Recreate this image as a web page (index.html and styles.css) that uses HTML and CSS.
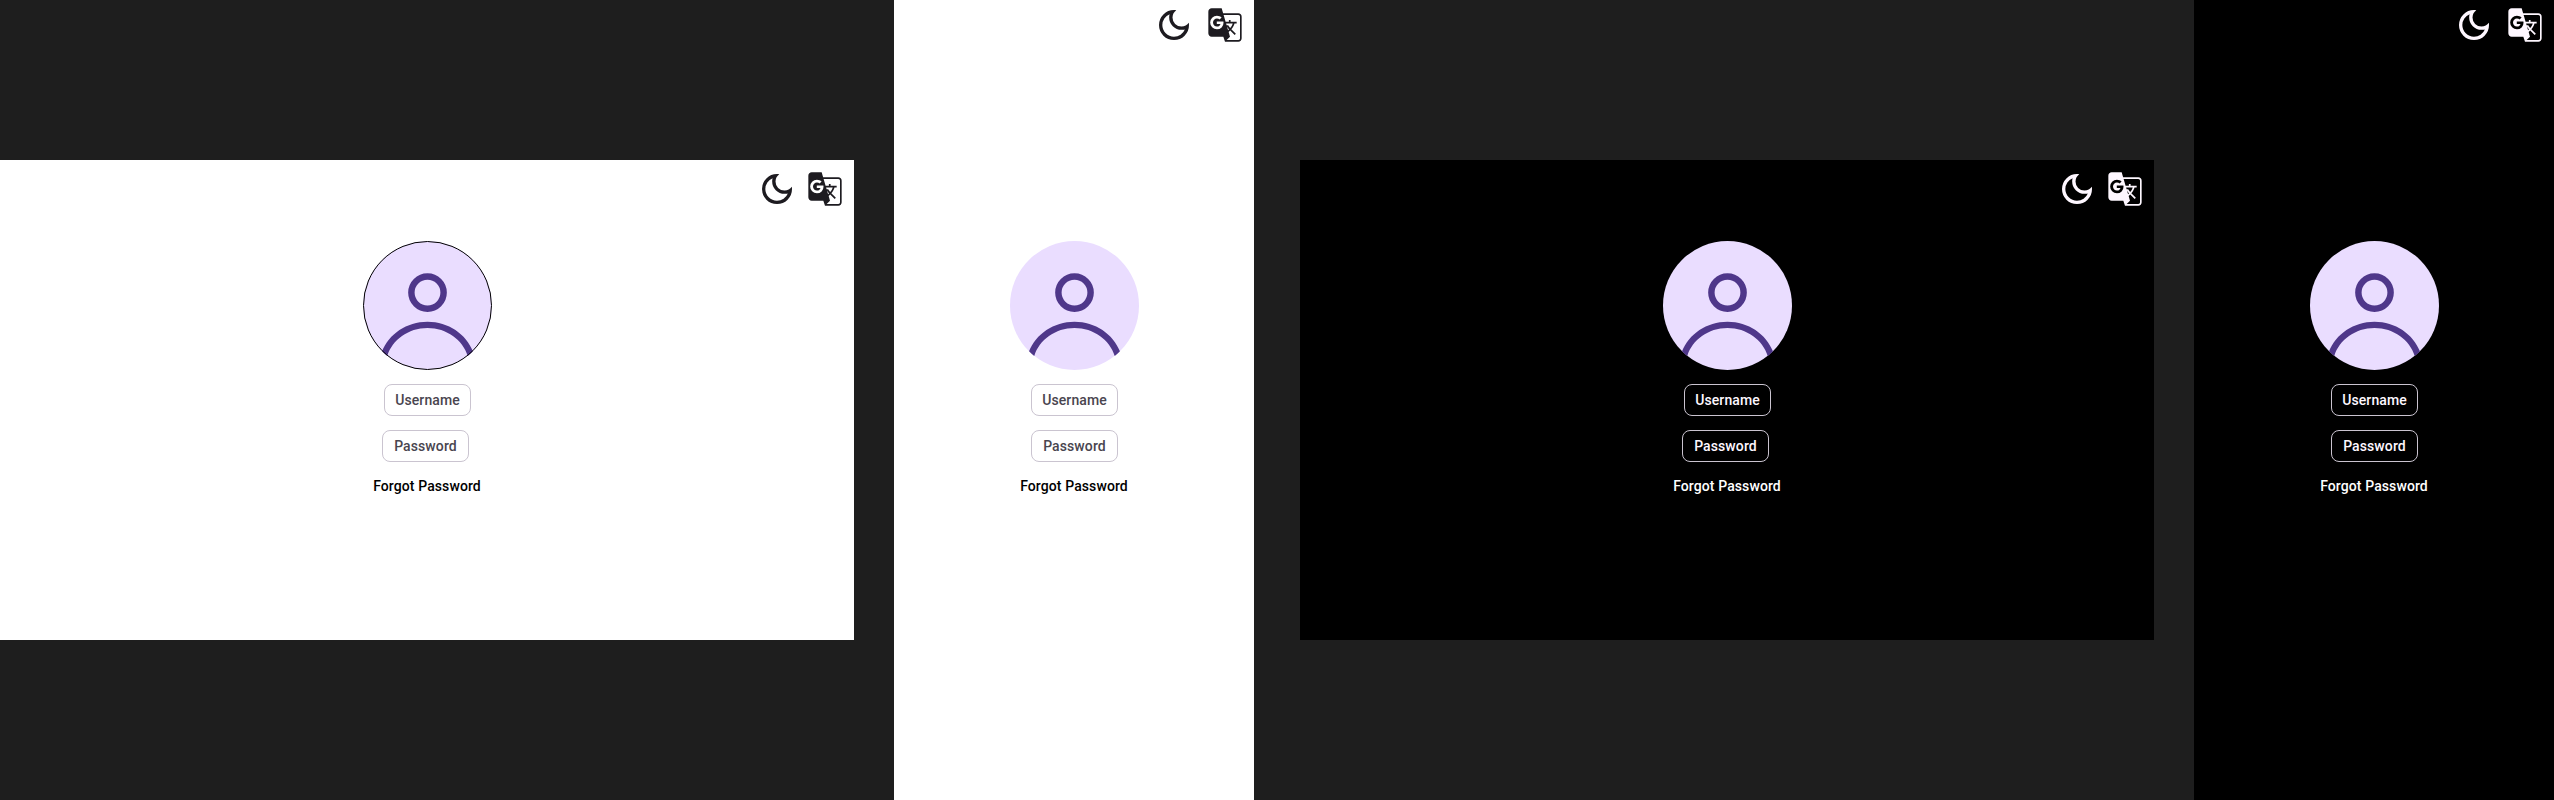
FILE: index.html
```html
<!DOCTYPE html>
<html lang="en">
<head>
<meta charset="utf-8">
<title>Login</title>
<link rel="stylesheet" href="styles.css">
</head>
<body>
<svg class="sprite" aria-hidden="true">
  <symbol id="moon" viewBox="0 -960 960 960"><path d="M480-120q-150 0-255-105T120-480q0-150 105-255t255-105q14 0 27.500 1t26.500 3q-41 29-65.500 75.500T444-660q0 90 63 153t153 63q55 0 101-24.500t75-65.500q2 13 3 26.500t1 27.500q0 150-105 255T480-120Zm0-80q88 0 158-48.500T740-375q-20 5-40 8t-40 3q-123 0-209.500-86.500T364-660q0-20 3-40t8-40q-78 32-126.500 102T200-480q0 116 82 198t198 82Z"/></symbol>
  <symbol id="translate" viewBox="0 -960 960 960"><path d="M480-80 440-200H160q-33 0-56.500-23.500T80-280v-520q0-33 23.500-56.500T160-880h240l35 120h365q35 0 57.500 22.500T880-680v520q0 33-22.500 56.500T800-80H480ZM286-376q69 0 113.500-44.500T444-536q0-8-.5-14.500T441-564H283v62h89q-8 28-30.500 43.500T287-443q-39 0-67-28t-28-69q0-41 28-69t67-28q18 0 34 6.500t29 19.500l49-47q-21-22-50.500-34T286-704q-67 0-114.500 47.500T124-540q0 69 47.500 116.500T286-376Zm268 20 22-21q-14-17-25.500-33T528-444l26 88Zm50-51q28-33 42.500-63t19.500-47H507l12 42h40q8 15 19 32.500t26 35.500Zm-84 287h280q18 0 29-11.500t11-28.500v-520q0-18-11-29t-29-11H447l47 162h79v-42h41v42h146v41h-51q-10 38-30 74t-47 67l109 107-29 29-108-108-36 37 32 111-80 80Z"/></symbol>
  <symbol id="person" viewBox="0 0 40 40"><circle cx="20" cy="20" r="20" fill="#eaddff"/><circle cx="20" cy="16" r="5" fill="none" stroke="#4f378a" stroke-width="2"/><path fill="#4f378a" d="M20 25C13.526 25 8.009 28.828 5.908 34.192 6.420 34.700 6.959 35.181 7.523 35.631 9.088 30.715 14 27 20 27S30.912 30.715 32.477 35.631C33.041 35.181 33.580 34.700 34.092 34.192 31.990 28.828 26.474 25 20 25Z"/></symbol>
</svg>
<main class="board">
  <section class="screen landscape light">
    <header class="actions"><svg class="icon"><use href="#moon"/></svg><svg class="icon"><use href="#translate"/></svg></header>
    <div class="login">
      <svg class="avatar"><use href="#person"/><circle class="ring" cx="64.5" cy="64.5" r="64"/></svg>
      <div class="chip">Username</div>
      <div class="chip password">Password</div>
      <div class="forgot">Forgot Password</div>
    </div>
  </section>
  <section class="screen portrait light">
    <header class="actions"><svg class="icon"><use href="#moon"/></svg><svg class="icon"><use href="#translate"/></svg></header>
    <div class="login">
      <svg class="avatar"><use href="#person"/></svg>
      <div class="chip">Username</div>
      <div class="chip password">Password</div>
      <div class="forgot">Forgot Password</div>
    </div>
  </section>
  <section class="screen landscape dark">
    <header class="actions"><svg class="icon"><use href="#moon"/></svg><svg class="icon"><use href="#translate"/></svg></header>
    <div class="login">
      <svg class="avatar"><use href="#person"/></svg>
      <div class="chip">Username</div>
      <div class="chip password">Password</div>
      <div class="forgot">Forgot Password</div>
    </div>
  </section>
  <section class="screen portrait dark">
    <header class="actions"><svg class="icon"><use href="#moon"/></svg><svg class="icon"><use href="#translate"/></svg></header>
    <div class="login">
      <svg class="avatar"><use href="#person"/></svg>
      <div class="chip">Username</div>
      <div class="chip password">Password</div>
      <div class="forgot">Forgot Password</div>
    </div>
  </section>
</main>
</body>
</html>
```

FILE: styles.css
```css
* { box-sizing: border-box; }
body {
  margin: 0;
  background: #1e1e1e;
  font: 500 14px/20px Roboto, sans-serif;
  letter-spacing: 0.1px;
}
.sprite { display: none; }
.board {
  display: flex;
  align-items: center;
  gap: 40px;
  width: 2554px;
  height: 800px;
}
.screen {
  flex: none;
  display: flex;
  flex-direction: column;
}
.landscape { width: 854px; height: 480px; }
.portrait { width: 360px; height: 800px; }
.landscape.dark { margin-left: 6px; }
.light { background: #fff; color: #000; }
.dark { background: #000; color: #fff; }
.actions {
  display: flex;
  justify-content: flex-end;
  gap: 8px;
  padding: 9px 9px 0 0;
  color: #1d1b20;
}
.dark .actions { color: #fef7ff; }
.portrait .actions { gap: 11px; padding-top: 5px; }
.icon { width: 40px; height: 40px; fill: currentColor; }
.login {
  display: flex;
  flex-direction: column;
  align-items: center;
  padding: 32px 0 0 1px;
}
.portrait .login { padding-top: 196px; }
.avatar { width: 129px; height: 129px; margin-bottom: 14px; }
.ring { fill: none; stroke: #000; stroke-width: 1px; }
.chip {
  width: 87px;
  height: 32px;
  border: 1px solid #cac4d0;
  border-radius: 8px;
  color: #49454f;
  line-height: 30px;
  text-align: center;
}
.dark .chip { color: #fef7ff; }
.password { margin-top: 14px; }
.landscape .password { margin-right: 4px; }
.forgot { margin: 14px 1px 0 0; }
```
